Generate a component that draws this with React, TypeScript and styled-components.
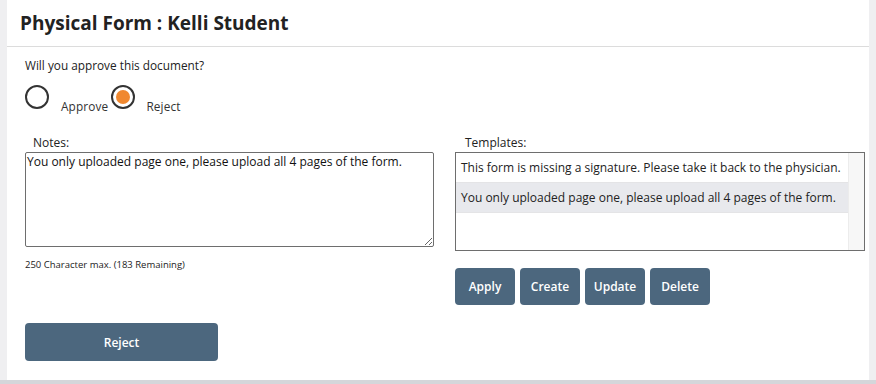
import React from "react";
import styled, { createGlobalStyle } from "styled-components";

const GlobalStyle = createGlobalStyle`
  html, body {
    margin: 0;
    padding: 0;
    background: #d5d6da;
    font-family: "Open Sans", "Lato", sans-serif;
    color: #222;
  }
`;

const Page = styled.div`
  width: 876px;
  height: 384px;
  box-sizing: border-box;
  background: #efeff1;
  padding: 0 7px;
  border-bottom: 4px solid #d5d6da;
  display: flex;
  flex-direction: column;
`;

const Card = styled.section`
  flex: 1;
  background: #ffffff;
  display: flex;
  flex-direction: column;
`;

const Header = styled.header`
  height: 47px;
  box-sizing: border-box;
  padding: 0 13px;
  display: flex;
  align-items: center;
  border-bottom: 1px solid #dcdcdc;
`;

const Title = styled.h1`
  margin: 0;
  font-size: 19px;
  font-weight: 700;
  color: #222;
`;

const Body = styled.div`
  padding: 10px 4px 0 18px;
  display: flex;
  flex-direction: column;
`;

const Question = styled.p`
  margin: 0;
  font-size: 11.8px;
  color: #222;
`;

const RadioRow = styled.div`
  display: flex;
  align-items: flex-end;
  margin-top: 12px;
`;

const RadioOption = styled.label`
  display: flex;
  align-items: flex-end;
  font-size: 11.8px;
  color: #333;
  cursor: pointer;
`;

const RadioCircle = styled.span<{ $checked?: boolean }>`
  width: 24px;
  height: 24px;
  box-sizing: border-box;
  border: 2px solid #333;
  border-radius: 50%;
  display: flex;
  align-items: center;
  justify-content: center;
  &::after {
    content: "";
    width: 14px;
    height: 14px;
    border-radius: 50%;
    background: ${(p) => (p.$checked ? "#f0882f" : "transparent")};
  }
`;

const RadioText = styled.span<{ $gap: number }>`
  margin-left: ${(p) => p.$gap}px;
  margin-bottom: -5px;
  margin-right: 3px;
  letter-spacing: 0.15px;
`;

const Columns = styled.div`
  display: flex;
  gap: 21px;
  margin-top: 27px;
`;

const Column = styled.div<{ $width: number }>`
  flex: none;
  width: ${(p) => p.$width}px;
  display: flex;
  flex-direction: column;
`;

const FieldLabel = styled.div<{ $indent: number }>`
  font-size: 12px;
  line-height: 14px;
  color: #222;
  padding-left: ${(p) => p.$indent}px;
  margin-bottom: 2px;
`;

const NotesArea = styled.textarea`
  width: 100%;
  height: 95px;
  box-sizing: border-box;
  border: 1px solid #6e6e6e;
  border-radius: 2px;
  padding: 2px 1px;
  font-family: "Open Sans", "Lato", sans-serif;
  font-size: 12px;
  line-height: 14px;
  color: #111;
  resize: vertical;
  outline: none;
`;

const Counter = styled.div`
  font-size: 9.5px;
  color: #222;
  margin-top: 11px;
`;

const ListBox = styled.div`
  width: 100%;
  height: 99px;
  box-sizing: border-box;
  border: 1px solid #6e6e6e;
  display: flex;
`;

const ListItems = styled.ul`
  flex: 1;
  margin: 0;
  padding: 0;
  list-style: none;
`;

const ListItem = styled.li<{ $selected?: boolean }>`
  height: 30px;
  box-sizing: border-box;
  padding: 0 5px;
  display: flex;
  align-items: center;
  font-size: 12px;
  color: #222;
  border-bottom: 1px solid #e4e4e6;
  background: ${(p) => (p.$selected ? "#e8e9ed" : "#ffffff")};
`;

const ScrollTrack = styled.div`
  width: 15px;
  background: #f7f7f7;
  border-left: 1px solid #ececec;
`;

const ButtonRow = styled.div`
  display: flex;
  gap: 5px;
  margin-top: 17px;
`;

const ActionButton = styled.button<{ $wide?: boolean }>`
  width: ${(p) => (p.$wide ? "193px" : "60px")};
  height: ${(p) => (p.$wide ? "38px" : "37px")};
  border: none;
  border-radius: 4px;
  background: #4c677e;
  color: #ffffff;
  font-family: "Open Sans", "Lato", sans-serif;
  font-size: 12px;
  font-weight: 600;
  cursor: pointer;
  padding: 0;
`;

const Footer = styled.div`
  margin-top: 18px;
`;

const templates = [
  "This form is missing a signature. Please take it back to the physician.",
  "You only uploaded page one, please upload all 4 pages of the form.",
];

const App: React.FC = () => {
  return (
    <>
      <GlobalStyle />
      <Page>
        <Card>
          <Header>
            <Title>Physical Form : Kelli Student</Title>
          </Header>
          <Body>
            <Question>Will you approve this document?</Question>
            <RadioRow>
              <RadioOption>
                <RadioCircle />
                <RadioText $gap={12}>Approve</RadioText>
              </RadioOption>
              <RadioOption>
                <RadioCircle $checked />
                <RadioText $gap={11}>Reject</RadioText>
              </RadioOption>
            </RadioRow>
            <Columns>
              <Column $width={409}>
                <FieldLabel $indent={8}>Notes:</FieldLabel>
                <NotesArea defaultValue="You only uploaded page one, please upload all 4 pages of the form." />
                <Counter>250 Character max. (183 Remaining)</Counter>
              </Column>
              <Column $width={410}>
                <FieldLabel $indent={10}>Templates:</FieldLabel>
                <ListBox>
                  <ListItems>
                    {templates.map((t, i) => (
                      <ListItem key={t} $selected={i === 1}>
                        {t}
                      </ListItem>
                    ))}
                  </ListItems>
                  <ScrollTrack />
                </ListBox>
                <ButtonRow>
                  <ActionButton>Apply</ActionButton>
                  <ActionButton>Create</ActionButton>
                  <ActionButton>Update</ActionButton>
                  <ActionButton>Delete</ActionButton>
                </ButtonRow>
              </Column>
            </Columns>
            <Footer>
              <ActionButton $wide>Reject</ActionButton>
            </Footer>
          </Body>
        </Card>
      </Page>
    </>
  );
};

export default App;
